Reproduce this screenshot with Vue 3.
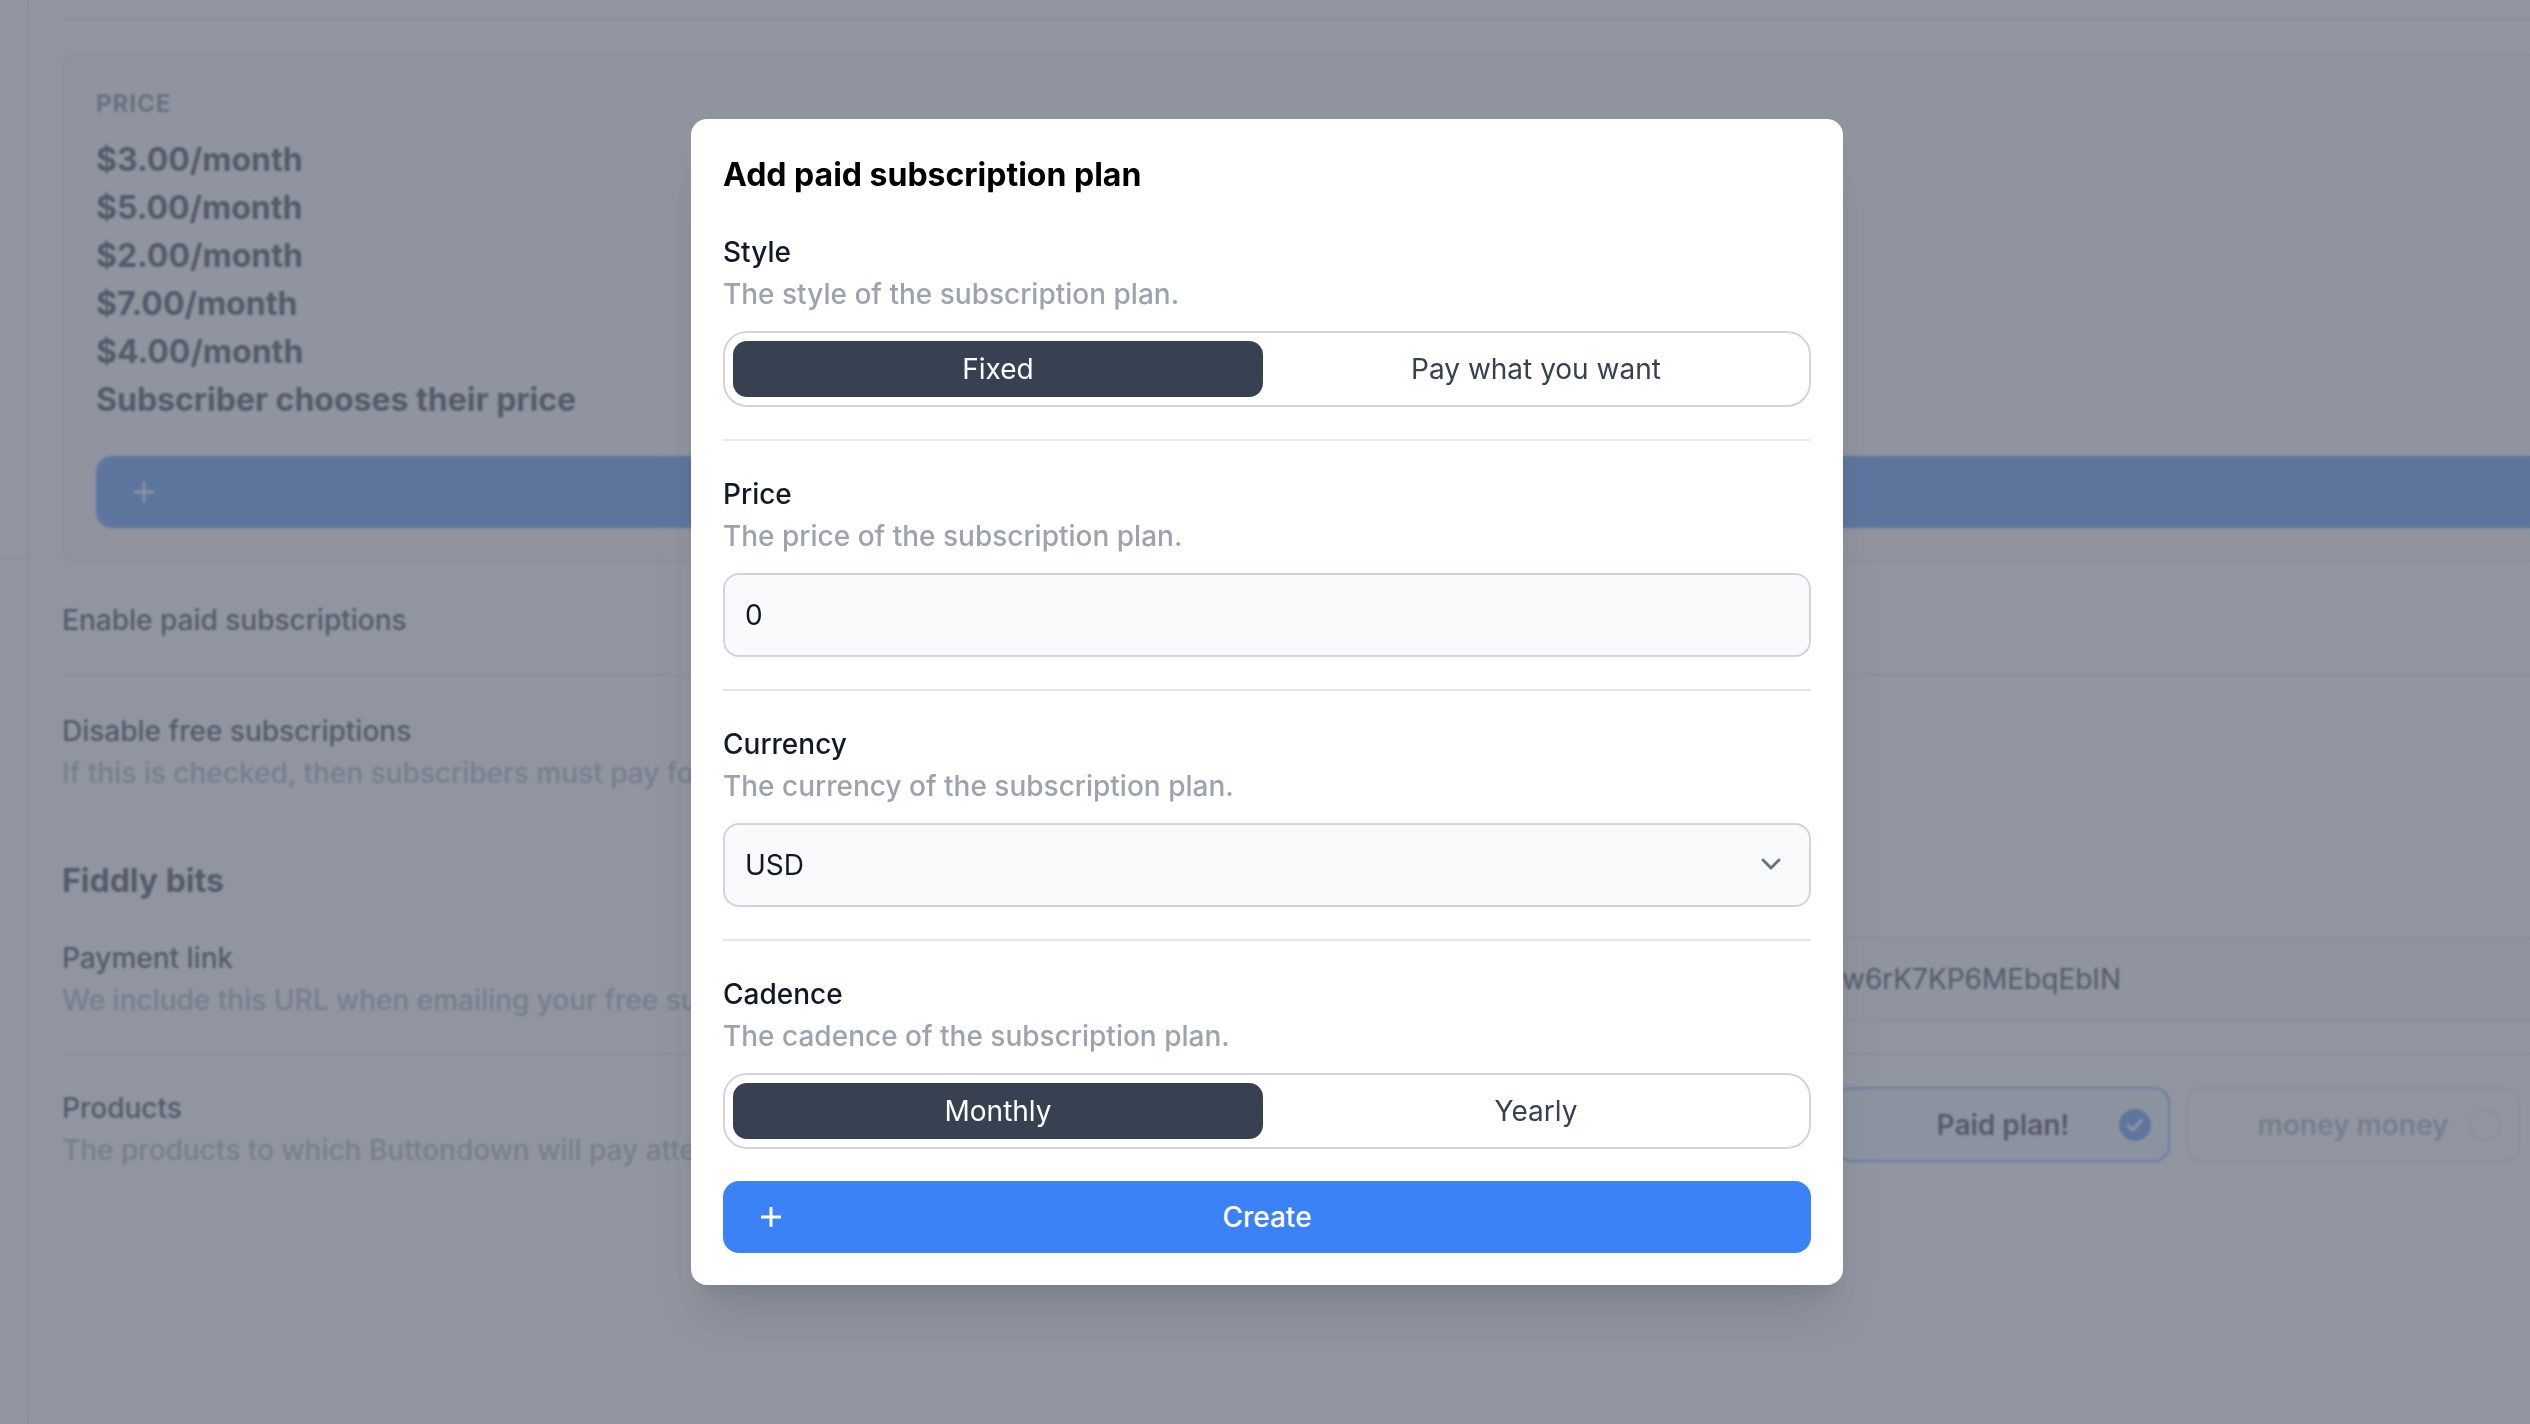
<script setup>
const prices = ['$3.00/month', '$5.00/month', '$2.00/month', '$7.00/month', '$4.00/month', 'Subscriber chooses their price']
</script>

<template>
  <div class="root">
    <div class="page">
      <aside class="side"><div class="side-top"></div></aside>
      <main class="main">
        <div class="head"></div>
        <section class="price-card">
          <div class="eyebrow">PRICE</div>
          <div class="price-list">
            <div v-for="p in prices" :key="p" class="price">{{ p }}</div>
          </div>
          <div class="add-bar">
            <svg class="plus" viewBox="0 0 20 20" fill="none" stroke="currentColor" stroke-width="2.4" stroke-linecap="round"><path d="M10 1v18M1 10h18" /></svg>
          </div>
        </section>
        <div class="row row-enable"><div class="lbl">Enable paid subscriptions</div></div>
        <div class="row row-disable">
          <div>
            <div class="lbl">Disable free subscriptions</div>
            <div class="desc">If this is checked, then subscribers must pay for access.</div>
          </div>
        </div>
        <h2 class="sub">Fiddly bits</h2>
        <div class="row row-split">
          <div class="left">
            <div class="lbl">Payment link</div>
            <div class="desc">We include this URL when emailing your free subscribers.</div>
          </div>
          <div class="right"><div class="url">w6rK7KP6MEbqEbIN</div></div>
        </div>
        <div class="row row-split row-products">
          <div class="left">
            <div class="lbl">Products</div>
            <div class="desc">The products to which Buttondown will pay attention.</div>
          </div>
          <div class="right cards">
            <div class="card on">
              Paid plan!
              <svg class="tick" viewBox="0 0 32 32"><circle cx="16" cy="16" r="16" fill="#3b82f6" /><path d="M9.5 16.8l4.4 4.2 8.6-9.6" fill="none" stroke="#fff" stroke-width="3.2" stroke-linecap="round" stroke-linejoin="round" /></svg>
            </div>
            <div class="card off">
              money money
              <span class="ring"></span>
            </div>
          </div>
        </div>
      </main>
    </div>

    <div class="overlay">
      <div class="modal">
        <h1 class="title">Add paid subscription plan</h1>

        <div class="field">
          <div class="f-lbl">Style</div>
          <div class="f-desc">The style of the subscription plan.</div>
          <div class="seg">
            <div class="opt sel">Fixed</div>
            <div class="opt">Pay what you want</div>
          </div>
        </div>
        <hr class="rule" />

        <div class="field">
          <div class="f-lbl">Price</div>
          <div class="f-desc">The price of the subscription plan.</div>
          <div class="box">0</div>
        </div>
        <hr class="rule" />

        <div class="field">
          <div class="f-lbl">Currency</div>
          <div class="f-desc">The currency of the subscription plan.</div>
          <div class="box">
            USD
            <svg class="chev" viewBox="0 0 20 12" fill="none" stroke="#6b7280" stroke-width="3" stroke-linecap="round" stroke-linejoin="round"><path d="M2 2l8 8 8-8" /></svg>
          </div>
        </div>
        <hr class="rule" />

        <div class="field">
          <div class="f-lbl">Cadence</div>
          <div class="f-desc">The cadence of the subscription plan.</div>
          <div class="seg">
            <div class="opt sel">Monthly</div>
            <div class="opt">Yearly</div>
          </div>
        </div>

        <button class="create">
          <svg class="plus" viewBox="0 0 20 20" fill="none" stroke="currentColor" stroke-width="3" stroke-linecap="round"><path d="M10 1v18M1 10h18" /></svg>
          Create
        </button>
      </div>
    </div>
  </div>
</template>

<style>
html, body { margin: 0; background: #fff; }
</style>

<style scoped>
.root {
  position: relative;
  width: 2530px;
  height: 1424px;
  overflow: hidden;
  font-family: Inter, "Liberation Sans", sans-serif;
  font-size: 28px;
  line-height: 42px;
  color: #111827;
}
.page { display: flex; height: 100%; background: #fff; }
.side { width: 27px; flex: none; border-right: 2px solid #e5e7eb; }
.side-top { height: 558px; border-bottom: 2px solid #e5e7eb; }
.main { flex: 1; min-width: 0; padding-left: 33px; }
.head { height: 18px; border-bottom: 2px solid #e5e7eb; margin-right: -20px; }

.price-card {
  margin-top: 34px;
  margin-right: -80px;
  padding: 32px;
  border: 2px solid #e5e7eb;
  border-radius: 12px;
  background: #f9fafb;
}
.eyebrow { font-size: 24px; line-height: 32px; font-weight: 700; letter-spacing: 1px; color: #6b7280; }
.price-list { margin-top: 16px; }
.price { font-size: 32px; line-height: 48px; font-weight: 700; }
.add-bar {
  display: flex;
  align-items: center;
  height: 72px;
  margin-top: 32px;
  padding-left: 38px;
  border-radius: 16px;
  background: #3b82f6;
  color: #fff;
}
.plus { width: 20px; height: 20px; }

.lbl { font-weight: 500; color: #111827; white-space: nowrap; }
.desc { font-weight: 500; color: #9ca3af; white-space: nowrap; }
.row { margin-right: -80px; }
.row-enable { margin-top: 37px; padding-bottom: 33px; border-bottom: 2px solid #e5e7eb; }
.row-disable { padding-top: 34px; }
.sub { margin: 59px 0 28px; font-size: 32px; line-height: 56px; font-weight: 700; }
.row-split { display: flex; }
.left { width: 1774px; flex: none; }
.right { flex: 1; min-width: 0; }
.row-split:not(.row-products) { padding-bottom: 32px; border-bottom: 2px solid #e5e7eb; }
.row-products { padding-top: 32px; }
.url {
  height: 80px;
  padding-left: 4px;
  border: 2px solid #e5e7eb;
  border-radius: 12px;
  background: #f9fafb;
  line-height: 80px;
  color: #111827;
  font-weight: 400;
}
.cards { display: flex; gap: 16px; }
.card {
  position: relative;
  width: 334px;
  height: 75px;
  box-sizing: border-box;
  display: flex;
  align-items: center;
  justify-content: center;
  border-radius: 16px;
  font-weight: 600;
}
.card.on { border: 2px solid #60a5fa; background: #eff6ff; color: #111827; }
.card.off { border: 2px solid #e5e7eb; color: #9ca3af; }
.tick { position: absolute; right: 17px; top: 20px; width: 32px; height: 32px; }
.ring { position: absolute; right: 17px; top: 20px; width: 28px; height: 28px; border: 2px solid #e5e7eb; border-radius: 50%; }

.overlay {
  position: absolute;
  inset: 0;
  display: flex;
  justify-content: center;
  align-items: flex-start;
  padding: 119px 0 0 4px;
  box-sizing: border-box;
  background: rgba(107, 114, 128, 0.75);
  backdrop-filter: blur(1px);
}
.modal {
  width: 1152px;
  box-sizing: border-box;
  padding: 32px;
  border-radius: 16px;
  background: #fff;
  box-shadow: 0 40px 50px -10px rgba(0, 0, 0, 0.1), 0 16px 20px -12px rgba(0, 0, 0, 0.1);
}
.title { margin: 0 0 32px; font-size: 32px; line-height: 48px; font-weight: 700; color: #000; }
.f-lbl { font-weight: 500; color: #111827; }
.f-desc { font-weight: 500; color: #9ca3af; margin-bottom: 16px; }
.seg {
  display: flex;
  gap: 8px;
  height: 76px;
  box-sizing: border-box;
  padding: 8px;
  border: 2px solid #d1d5db;
  border-radius: 24px;
}
.opt {
  flex: 1;
  display: flex;
  align-items: center;
  justify-content: center;
  border-radius: 14px;
  font-weight: 400;
  color: #374151;
}
.opt.sel { background: #374151; color: #fff; }
.rule { height: 2px; margin: 32px 0; border: 0; background: #e5e7eb; }
.box {
  position: relative;
  display: flex;
  align-items: center;
  height: 84px;
  box-sizing: border-box;
  padding-left: 20px;
  border: 2px solid #d1d5db;
  border-radius: 16px;
  background: #f8fafc;
}
.chev { position: absolute; right: 28px; top: 33px; width: 20px; height: 12px; }
.create {
  position: relative;
  display: flex;
  align-items: center;
  justify-content: center;
  width: 100%;
  height: 72px;
  margin-top: 32px;
  padding: 0;
  border: 0;
  border-radius: 16px;
  background: #3b82f6;
  color: #fff;
  font: inherit;
  font-weight: 500;
}
.create .plus { position: absolute; left: 38px; top: 26px; }
</style>
